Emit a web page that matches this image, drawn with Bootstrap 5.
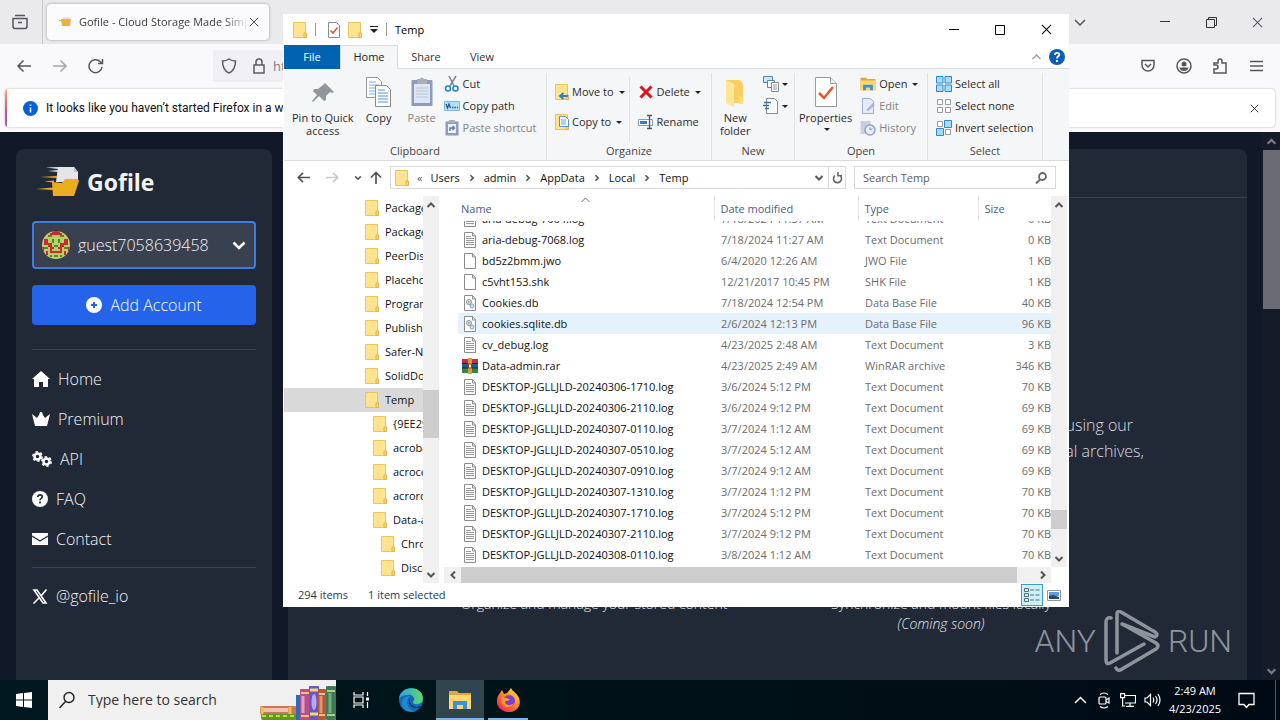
<!DOCTYPE html>
<html lang="en">
<head>
  <meta charset="UTF-8">
  <meta name="viewport" content="width=device-width, initial-scale=1">
  <title>Temp</title>
  <link href="https://cdn.jsdelivr.net/npm/bootstrap@5.3.0/dist/css/bootstrap.min.css" rel="stylesheet">
  <style>
    body {
      font-family: "Open Sans", "Noto Sans", sans-serif;
      font-size: 11px;
      line-height: 16px;
      color: #111;
      background: #111827;
    }
    svg { flex-shrink: 0; display: block; }
    .ln { fill: none; stroke: currentColor; stroke-width: 1.5; }
    a { color: inherit; text-decoration: none; }
    .plain { background: none; border: 0; padding: 0; color: inherit; }
    .slot { width: 36px; height: 44px; display: flex; align-items: center; justify-content: center; }

    /* Browser */
    .tabstrip { height: 44px; background: #eaeaed; color: #55555c; }
    .tabstrip-left { width: 43px; height: 44px; border-right: 1px solid #c8c8ce; padding-left: 12px; }
    .ff-tab { width: 222px; height: 36px; background: #fbfbfd; border-radius: 4px; box-shadow: 0 0 3px rgba(0,0,0,.35); color: #3b3b42; padding-left: 12px; }
    .ff-title { width: 170px; overflow: hidden; white-space: nowrap; -webkit-mask-image: linear-gradient(90deg, #000 85%, transparent); }
    .win-btn { width: 46px; height: 44px; }
    .ff-bar { height: 44px; background: #f9f9fb; color: #55555c; padding: 0 6px; }
    .ff-url { height: 32px; background: #f0f0f4; margin-left: 99px; margin-right: 200px; color: #5b5b66; }
    .ff-url input { font-size: 13px; color: #8a7f78; outline: 0; }
    .notice-wrap { background: #f9f9fb; padding: 1px 5px 5px; }
    .notice { height: 38px; background: #fff; border-radius: 4px; box-shadow: 0 0 2px rgba(0,0,0,.3); overflow: hidden; }
    .notice-edge { width: 2px; background: linear-gradient(#ffa45c, #e05a78, #9059c9); }
    .notice-text { font-family: Roboto, "Open Sans", sans-serif; font-size: 12px; }

    /* Gofile page */
    .page { color: #f3f4f6; min-height: 0; overflow: hidden; }
    .side { width: 256px; background: #212936; border-radius: 8px 8px 0 0; margin: 17px 16px 0; padding: 16px; font-size: 16px; font-weight: 300; }
    .brand { font-size: 23px; line-height: 34px; font-weight: 700; margin-bottom: 22px; padding-left: 4px; }
    .account { height: 48px; background: #394150; border: 2px solid #3f7be0; border-radius: 4px; padding: 0 8px; margin-bottom: 16px; }
    .account select { appearance: none; background: none; border: 0; outline: 0; color: #f3f4f6; font-weight: 300; min-width: 0; padding-left: 4px; }
    .add-btn { height: 40px; background: #2563eb; color: #fff; border: 0; border-radius: 4px; font-weight: 300; margin-bottom: 24px; }
    .rule { border-top: 1px solid #3b4554; }
    .side-nav { padding-top: 9px; }
    .side-link { height: 40px; }
    .main-pane { background: #212936; border-radius: 8px 8px 0 0; margin: 17px 15px 0 0; padding-top: 48px; }
    .intro { font-size: 16px; line-height: 26px; font-weight: 300; margin: 214px 103px 130px 0; color: #d8dbe0; }
    .intro-first { margin-right: 11px; }
    .features { max-width: 694px; font-size: 14px; line-height: 20px; font-weight: 300; color: #e4e6ea; }
    .page-scroll { width: 18px; background: #151c28; color: #777a82; }
    .page-scroll .slot { width: 18px; height: 18px; }
    .page-thumb { height: 159px; margin-left: 1px; background: #6a6b74; }
    .watermark { right: 48px; bottom: 48px; color: #8f949c; font-family: Roboto, "Open Sans", sans-serif; font-weight: 300; font-size: 32px; line-height: 62px; }

    /* Explorer window */
    .explorer { inset: 14px 211px 113px 283px; background: #fff; border-left: 1px solid #fff; }
    .titlebar { height: 31px; padding-left: 9px; }
    .caption-btn { width: 46px; height: 30px; display: flex; align-items: center; justify-content: center; }
    .quick-sep { width: 1px; height: 13px; background: #999; }
    .rtabs { height: 24px; border-bottom: 1px solid #dadbdc; }
    .rtab { height: 24px; line-height: 24px; width: 56px; text-align: center; color: #333; }
    .rtab-file { background: #0063b1; color: #fff; }
    .rtab-on { width: 58px; background: #f5f6f7; border: 1px solid #dadbdc; border-bottom: 0; color: #222; line-height: 22px; }
    .ribbon { height: 92px; background: #f5f6f7; border-bottom: 1px solid #dadbdc; color: #2b2b2b; padding-top: 4px; }
    .rgroup { border-right: 1px solid #e0e1e3; }
    .rgroup-label { line-height: 18px; color: #454545; text-align: center; }
    .big { line-height: 13px; display: flex; flex-direction: column; align-items: center; padding-top: 4px; }
    .big svg { margin-bottom: 2px; }
    .sm-btn { height: 22px; display: flex; align-items: center; gap: 3px; white-space: nowrap; }
    .org-btn { height: 30px; }
    .dim { color: #838383; }
    .g-clip { width: 263px; } .g-org { width: 165px; } .g-new { width: 83px; } .g-open { width: 133px; } .g-sel { width: 115px; }
    .tri { width: 0; height: 0; border: 3px solid transparent; border-top-color: #222; border-bottom: 0; margin-left: 2px; }
    .addr-row { padding: 5px 13px 7px 7px; color: #555; }
    .nav-slot { width: 25px; display: flex; justify-content: center; }
    .addr, .find { height: 23px; border: 1px solid #d9d9d9; }
    .find { width: 202px; margin-left: 8px; }
    .find input { outline: 0; min-width: 0; color: #444; }
    .find input::placeholder { color: #5d5d5d; }
    .crumb { color: #111; }
    .refresh { width: 17px; border-left: 1px solid #d9d9d9; }

    .tree-pane { width: 139px; flex-shrink: 0; overflow: hidden; }
    .tree-item { height: 24px; display: flex; align-items: center; gap: 6px; white-space: nowrap; padding-left: 81px; }
    .lvl-1 { padding-left: 89px; }
    .lvl-2 { padding-left: 97px; }
    .tree-on { background: #d9d9d9; }
    .vbar { width: 16px; flex-shrink: 0; background: #f0f0f0; color: #555; }
    .vbar .arrow { height: 17px; display: flex; align-items: center; justify-content: center; }
    .bar-thumb { background: #cdcdcd; }
    .vbar-list { margin-right: 2px; }
    .hbar { height: 16px; background: #f0f0f0; margin-right: 18px; color: #555; }
    .hbar .arrow { width: 17px; display: flex; align-items: center; justify-content: center; }

    .list-pane { margin-left: 5px; min-width: 0; }
    .list-scroll { padding-left: 14px; overflow: hidden; min-height: 0; }
    .files { width: 100%; table-layout: fixed; border-collapse: collapse; }
    .files th { height: 25px; padding: 0 0 0 6px; font-weight: 400; color: #4c607a; border-left: 1px solid #e5e5e5; position: relative; }
    .files th:first-child { padding-left: 3px; border-left: 0; }
    .sort-mark { position: absolute; top: 1px; left: 123px; color: #777; }
    .files td { padding: 0 0 0 7px; color: #6d6d6d; white-space: nowrap; }
    .files td:first-child { padding-left: 4px; color: #111; }
    .files td:last-child { text-align: right; }
    .line-box { height: 21px; line-height: 21px; }
    .files .hot td { background: #e5f1fb; }
    /* first row is scrolled under the header, only its lower part shows */
    .peek { height: 8px; overflow: hidden; display: flex; align-items: flex-end; }
    .peek-end { justify-content: flex-end; }
    .status { height: 24px; color: #1e395b; padding-left: 14px; }
    .view-on { width: 22px; height: 22px; border: 1px solid #3c9dc4; background: #cdeefb; display: flex; align-items: center; justify-content: center; }

    /* Taskbar */
    .taskbar { height: 40px; background: linear-gradient(90deg, #00191f, #001218 50%, #000a14); color: #fff; }
    .task-btn { width: 50px; display: flex; align-items: center; justify-content: center; }
    .task-app { width: 48px; }
    .task-run { border-bottom: 2px solid #76b9ed; padding-top: 2px; }
    .task-on { background: #31454c; }
    .task-search { width: 288px; background: #f0f0f0; color: #222; padding-left: 10px; }
    .task-search input { font-size: 14px; outline: 0; min-width: 0; }
    .task-search input::placeholder { color: #333; }
    .tray-btn { width: 24px; display: flex; justify-content: center; }
    .clock { width: 62px; line-height: 18px; text-align: center; }
    .peek-desk { width: 5px; border-left: 1px solid #4c5660; }
  </style>
</head>
<body class="vh-100 d-flex flex-column overflow-hidden position-relative">

  <!-- Shared icons -->
  <svg width="0" height="0" class="position-absolute" aria-hidden="true">
    <symbol id="folder" viewBox="0 0 14 16">
      <path d="M.5.5h12v15H.5z" fill="#ffe38f" stroke="#e8c65c"/>
      <path d="M11 11h2.500v4.500H11z" fill="#ffd768" stroke="#dfb548"/>
    </symbol>
    <symbol id="log" viewBox="0 0 14 16">
      <path d="M1.500.5h8l3 3.500v11.500h-11z" fill="#fff" stroke="#8c8c8c"/>
      <path d="M9.500.5V4h3" fill="none" stroke="#8c8c8c"/>
      <path d="M3 4.500h5M3 6.500h8M3 8.500h8M3 10.500h8M3 12.500h8" stroke="#9a9a9a"/>
    </symbol>
    <symbol id="blank" viewBox="0 0 14 16">
      <path d="M1.500.5h8l3 3.500v11.500h-11z" fill="#fff" stroke="#8c8c8c"/>
      <path d="M9.500.5V4h3" fill="none" stroke="#8c8c8c"/>
    </symbol>
    <symbol id="db" viewBox="0 0 14 16">
      <path d="M1.500.5h8l3 3.500v11.500h-11z" fill="#fff" stroke="#8c8c8c"/>
      <path d="M9.500.5V4h3" fill="none" stroke="#8c8c8c"/>
      <circle cx="6" cy="7" r="2.500" fill="#dce3ea" stroke="#8797a6"/>
      <circle cx="6" cy="7" r=".8" fill="#778"/>
      <circle cx="9" cy="11" r="2" fill="#d4e4f2" stroke="#7fa0bd"/>
    </symbol>
    <symbol id="rar" viewBox="0 0 16 16">
      <path d="M0 1h16v5H0z" fill="#c22f3d"/><path d="M0 6h16v4H0z" fill="#2f55a8"/><path d="M0 10h16v5H0z" fill="#2d8a4b"/>
      <path d="M0 5.500h16M0 10h16" stroke="#222"/>
      <path d="M6 0h4v16H6z" fill="#dd9b35"/><path d="M6.500 6h3v4h-3z" fill="#fff3b0" stroke="#704d14"/>
    </symbol>
    <symbol id="up" viewBox="0 0 10 10"><path d="M1.500 7 5 3.500 8.500 7" fill="none" stroke="currentColor" stroke-width="2"/></symbol>
    <symbol id="down" viewBox="0 0 10 10"><path d="M1.500 3 5 6.500 8.500 3" fill="none" stroke="currentColor" stroke-width="2"/></symbol>
    <symbol id="left" viewBox="0 0 10 10"><path d="M7 1.500 3.500 5 7 8.500" fill="none" stroke="currentColor" stroke-width="2"/></symbol>
    <symbol id="right" viewBox="0 0 10 10"><path d="M3 1.500 6.500 5 3 8.500" fill="none" stroke="currentColor" stroke-width="2"/></symbol>
    <symbol id="cross" viewBox="0 0 12 12"><path d="M1 1l10 10M11 1 1 11" fill="none" stroke="currentColor" stroke-width="1.100"/></symbol>
    <symbol id="check-page" viewBox="0 0 22 30">
      <path d="M.5.5h15l6 6v23H.5z" fill="#fff" stroke="#9a9a9a"/><path d="M15.500.5v6h6" fill="#eee" stroke="#9a9a9a"/>
      <path d="M4 16l5 5 9-11" fill="none" stroke="#e0562b" stroke-width="2.500"/>
    </symbol>
    <symbol id="check-page-sm" viewBox="0 0 12 16">
      <path d="M.5.5h8l3 3v12H.5z" fill="#fff" stroke="#8a8a8a"/><path d="M2.500 8.500 5 11l4.500-5.500" fill="none" stroke="#e0562b" stroke-width="1.600"/>
    </symbol>
    <symbol id="explorer-ico" viewBox="0 0 22 20">
      <path d="M0 1h8l2 2h12v16H0z" fill="#e8a33d"/><path d="M0 5h22v14H0z" fill="#ffd76e"/>
      <path d="M4 19v-8h14v8h-4v-4H8v4z" fill="#3f8fd6"/>
    </symbol>
  </svg>

  <!-- Firefox -->
  <header>
    <div class="tabstrip d-flex align-items-center">
      <div class="tabstrip-left d-flex align-items-center">
        <svg width="16" height="16" class="ln" viewBox="0 0 16 16"><path d="M3 1.500h10M1 4.500h14v8a2 2 0 0 1-2 2H3a2 2 0 0 1-2-2zM6 8.500h4"/></svg>
      </div>
      <div class="ff-tab d-flex align-items-center ms-1">
        <svg width="12" height="10" viewBox="0 0 12 10" class="me-1"><path d="M4 0h7v5H4z" fill="#e5e5e5"/><path d="M0 3h3v1H0zM2 2h10l-1 7H3z" fill="#e8b43c"/></svg>
        <span class="ff-title ms-1">Gofile - Cloud Storage Made Simple</span>
        <button class="plain" aria-label="Close tab"><svg width="10" height="10"><use href="#cross"/></svg></button>
      </div>
      <div class="d-flex align-items-center ms-auto">
        <button class="plain me-5 pe-2" aria-label="List all tabs"><svg width="12" height="7" class="ln" viewBox="0 0 12 7"><path d="M1 1l5 5 5-5"/></svg></button>
        <button class="plain win-btn d-flex align-items-center justify-content-center" aria-label="Minimize"><svg width="10" height="2"><path d="M0 .5h10" stroke="#333"/></svg></button>
        <button class="plain win-btn d-flex align-items-center justify-content-center" aria-label="Restore"><svg width="11" height="11" fill="none" stroke="#333"><path d="M.5 2.500h8v8h-8zM2.500 2.500v-2h8v8h-2"/></svg></button>
        <button class="plain win-btn d-flex align-items-center justify-content-center" aria-label="Close"><svg width="11" height="11"><use href="#cross"/></svg></button>
      </div>
    </div>
    <div class="ff-bar d-flex align-items-center">
      <button class="plain slot" aria-label="Back"><svg width="16" height="16" class="ln" viewBox="0 0 16 16"><path d="M15 8H2M7.500 2.500 2 8l5.500 5.500"/></svg></button>
      <button class="plain slot opacity-50" aria-label="Forward"><svg width="16" height="16" class="ln" viewBox="0 0 16 16"><path d="M1 8h13M8.500 2.500 14 8l-5.500 5.500"/></svg></button>
      <button class="plain slot" aria-label="Reload"><svg width="16" height="16" class="ln" viewBox="0 0 16 16"><path d="M14 9a6.500 6.500 0 1 1-2-5.500L14 5M14.500 1v4.500H10"/></svg></button>
      <div class="ff-url d-flex align-items-center flex-fill ps-2">
        <svg width="16" height="16" class="ln me-3" viewBox="0 0 16 16"><path d="M8 1c2 1.500 4 2 6.500 2 0 6-2 10-6.500 12C3.500 13 1.500 9 1.500 3 4 3 6 2.500 8 1z"/></svg>
        <svg width="12" height="16" class="ln me-2" viewBox="0 0 12 16"><path d="M1 7h10v8H1zM3 7V4a3 3 0 0 1 6 0v3"/></svg>
        <input class="plain flex-fill" type="text" value="https://gofile.io/home" aria-label="Address">
      </div>
      <button class="plain slot" aria-label="Pocket"><svg width="14" height="14" class="ln" viewBox="0 0 14 14"><path d="M1 1.500h12V6a6 6 0 0 1-12 0zM4 5l3 3 3-3"/></svg></button>
      <button class="plain slot" aria-label="Account"><svg width="16" height="16" viewBox="0 0 16 16"><circle cx="8" cy="8" r="7" class="ln"/><circle cx="8" cy="6" r="2.500" fill="currentColor"/><path d="M3.500 9.500h9c-.5 2.500-2 3.500-4.500 3.500s-4-1-4.500-3.500z" fill="currentColor"/></svg></button>
      <button class="plain slot" aria-label="Extensions"><svg width="16" height="16" class="ln" viewBox="0 0 16 16"><path d="M2 15v-4h2a1.500 1.500 0 0 0 0-4H2V5h4V3a2 2 0 0 1 4 0v2h4v10z"/></svg></button>
      <button class="plain slot" aria-label="Menu"><svg width="13" height="12" class="ln" viewBox="0 0 13 12"><path d="M0 1.500h13M0 6h13M0 10.500h13"/></svg></button>
    </div>
    <div class="notice-wrap">
      <div class="notice d-flex align-items-center">
        <div class="notice-edge h-100"></div>
        <svg width="15" height="15" viewBox="0 0 15 15" class="ms-3 me-2"><circle cx="7.500" cy="7.500" r="7.500" fill="#0061e0"/><path d="M7.500 6.500v5M7.500 3.500v1.500" stroke="#fff" stroke-width="1.500"/></svg>
        <span class="notice-text">It looks like you haven’t started Firefox in a while.</span>
        <button class="plain ms-auto me-3" aria-label="Dismiss"><svg width="9" height="9"><use href="#cross"/></svg></button>
      </div>
    </div>
  </header>

  <!-- Gofile -->
  <div class="page d-flex flex-fill">
    <aside class="side">
      <a href="#" class="brand d-flex align-items-center gap-2">
        <svg width="43" height="32" viewBox="0 0 43 32">
          <path d="M22 1h16l4 5v10H20z" fill="#e3e5ea"/><path d="M38 1v5h4z" fill="#b9bdc6"/>
          <path d="M16 16l10 1 3-4h13l1 2-5 15H17z" fill="#e9ad1e"/>
          <path d="M10 1.500 22 1v2zM12 5l10-1v2z" fill="#dfe2e8"/>
          <path d="M4 11l17-1v2zM8 15.500l10-1v2zM0 23l17-1.500v2.500z" fill="#e9ad1e"/>
        </svg>
        <span>Gofile</span>
      </a>
      <div class="account d-flex align-items-center">
        <svg width="28" height="28" viewBox="0 0 14 14" shape-rendering="crispEdges">
          <clipPath id="round"><circle cx="7" cy="7" r="7"/></clipPath>
          <g clip-path="url(#round)">
            <path fill="#b8cf6a" d="M0 0h14v14H0z"/>
            <path fill="#c92a35" d="M5 0h4v2H5zM4 1h1v1H4zM9 1h1v1H9zM1 4h2v3H1zM11 4h2v3h-2zM3 6h2v2H3zM9 6h2v2H9zM0 8h1v2H0zM13 8h1v2h-1zM4 8h1v3H4zM9 8h1v3H9zM5 10h4v1H5zM2 10h1v2H2zM11 10h1v2h-1zM5 8h1v1H5zM8 8h1v1H8z"/>
            <path fill="#56852c" d="M3 2h2v1H3zM9 2h2v1H9zM5 4h1v2H5zM8 4h1v2H8zM6 7h2v1H6zM1 8h2v1H1zM11 8h2v1h-2zM6 12h2v1H6zM4 12h1v1H4zM9 12h1v1H9z"/>
          </g>
        </svg>
        <select class="flex-fill ms-1" aria-label="Account"><option>guest7058639458</option></select>
        <svg width="14" height="9" viewBox="0 0 14 9"><path d="M1.500 1.500 7 7l5.500-5.500" fill="none" stroke="#fff" stroke-width="2.500"/></svg>
      </div>
      <button class="add-btn w-100 d-flex align-items-center justify-content-center gap-2">
        <svg width="16" height="16" viewBox="0 0 16 16"><circle cx="8" cy="8" r="8" fill="#fff"/><path d="M8 5v6M5 8h6" stroke="#2563eb" stroke-width="2"/></svg>
        Add Account
      </button>
      <div class="rule"></div>
      <nav class="side-nav">
        <a href="#" class="side-link d-flex align-items-center gap-2"><svg width="18" height="16" viewBox="0 0 18 16"><path d="M9 0l9 8h-2v8h-5v-5H7v5H2V8H0z" fill="#fff"/></svg>Home</a>
        <a href="#" class="side-link d-flex align-items-center gap-2"><svg width="18" height="14" viewBox="0 0 18 14"><path d="M3 14 0 2l5 4 4-6 4 6 5-4-3 12z" fill="#fff"/><circle cx="9" cy="1.500" r="1.500" fill="#fff"/></svg>Premium</a>
        <a href="#" class="side-link d-flex align-items-center gap-2"><svg width="20" height="16" viewBox="0 0 20 16" fill="none" stroke="#fff"><circle cx="5.500" cy="5.500" r="3" stroke-width="2.500"/><circle cx="5.500" cy="5.500" r="4.700" stroke-width="1.500" stroke-dasharray="2.400 2.500"/><circle cx="14.500" cy="10.500" r="3" stroke-width="2.500"/><circle cx="14.500" cy="10.500" r="4.700" stroke-width="1.500" stroke-dasharray="2.400 2.500"/></svg>API</a>
        <a href="#" class="side-link d-flex align-items-center gap-2"><svg width="16" height="16" viewBox="0 0 16 16"><circle cx="8" cy="8" r="8" fill="#fff"/><path d="M5.800 6c0-3 4.500-2.500 4.500-.2C10.300 7.500 8 7.200 8 9.200M8 10.500v2" fill="none" stroke="#212936" stroke-width="1.700"/></svg>FAQ</a>
        <a href="#" class="side-link d-flex align-items-center gap-2"><svg width="16" height="12" viewBox="0 0 16 12"><path d="M0 0h16v12H0z" fill="#fff"/><path d="M0 3l8 5 8-5" fill="none" stroke="#212936" stroke-width="1.200"/></svg>Contact</a>
        <div class="rule my-2"></div>
        <a href="#" class="side-link d-flex align-items-center gap-2"><svg width="16" height="15" viewBox="0 0 16 15"><path d="M2 1h3l9 13h-3zM14.500.5 9 7M7 9l-5.500 5.500" fill="none" stroke="#fff" stroke-width="1.600"/></svg>@gofile_io</a>
      </nav>
    </aside>
    <main class="main-pane flex-fill">
      <div class="rule"></div>
      <p class="intro text-end"><span class="d-block intro-first">using our</span>digital archives,</p>
      <div class="features row g-0 mx-auto text-center">
        <div class="col">Organize and manage your stored content</div>
        <div class="col">Synchronize and mount files locally<br><em>(Coming soon)</em></div>
      </div>
    </main>
    <div class="page-scroll d-flex flex-column">
      <div class="slot"><svg width="11" height="11"><use href="#up"/></svg></div>
      <div class="page-thumb"></div>
      <div class="slot mt-auto"><svg width="11" height="11"><use href="#down"/></svg></div>
    </div>
  </div>

  <!-- Taskbar -->
  <footer class="taskbar d-flex">
    <button class="plain task-btn task-app" aria-label="Start"><svg width="16" height="16" viewBox="0 0 16 16"><path d="M0 2l7-1v6.500H0zM8 1l8-1v7.500H8zM0 8.500h7V15l-7-1zM8 8.500h8V16l-8-1z" fill="#fff"/></svg></button>
    <div class="task-search d-flex align-items-center">
      <svg width="18" height="18" viewBox="0 0 18 18" fill="none" stroke="#222" stroke-width="1.400"><circle cx="11" cy="6.500" r="5"/><path d="M7.500 10.500 1.500 17"/></svg>
      <input class="plain flex-fill ms-2 ps-1" type="text" placeholder="Type here to search" aria-label="Search">
      <svg width="76" height="36" viewBox="0 0 76 36" class="align-self-end">
        <rect x="0" y="22" width="37" height="9" rx="2" fill="#cf7358"/><rect x="3" y="24" width="25" height="4" fill="#eec1ae"/><path d="M2 23v7M30 23v7" stroke="#e8c24a" stroke-width="3"/>
        <rect x="1" y="30" width="36" height="6" rx="2" fill="#5c9c1d"/><path d="M2 32h33" stroke="#c7cf59" stroke-width="2" stroke-dasharray="4 3"/>
        <rect x="36" y="11" width="5" height="25" fill="#2b6cb8"/><rect x="40" y="5" width="10" height="31" rx="1" fill="#b84f88"/><path d="M43 12v17" stroke="#e3a0c4" stroke-width="3"/>
        <path d="M41 9h8M41 32h8" stroke="#f0c46a" stroke-width="2"/>
        <rect x="49" y="2" width="10" height="34" rx="1" fill="#6b55c4"/><path d="M50 6h8M50 30h8" stroke="#f1d77a" stroke-width="3"/><ellipse cx="54" cy="18" rx="2.500" ry="8" fill="#b9a6f0"/>
        <rect x="58" y="5" width="8" height="31" rx="1" fill="#b5573b"/><path d="M61 12v17" stroke="#dc9870" stroke-width="3"/><path d="M59 10h6M59 31h6" stroke="#f2c08b" stroke-width="2"/>
        <rect x="66" y="2" width="10" height="34" rx="1" fill="#3d7a55"/><path d="M70 9v20" stroke="#76ab82" stroke-width="3"/><path d="M67 7h8M67 31h8" stroke="#b9c987" stroke-width="2"/>
      </svg>
    </div>
    <button class="plain task-btn" aria-label="Task view"><svg width="17" height="16" viewBox="0 0 17 16" fill="none" stroke="#fff" stroke-width="1.200"><path d="M1 0v3h9V0M1 16v-3h9v3M1 5h9v6H1zM14.500 0v4M14.500 10v6"/><path d="M13 5.500h3v3h-3z" fill="#fff" stroke="none"/></svg></button>
    <button class="plain task-btn" aria-label="Edge">
      <svg width="24" height="24" viewBox="0 0 24 24">
        <defs><linearGradient id="edge-top"><stop stop-color="#2aa4dc"/><stop offset="1" stop-color="#5fd86a"/></linearGradient></defs>
        <circle cx="12" cy="12" r="12" fill="#1668b5"/>
        <path d="M0 11C1-3 23-3 24 10c0 5-4 7-8 6-3-1-2-2-1-4 1-3-3-6-7-5-4 0-7 2-8 4z" fill="url(#edge-top)"/>
        <path d="M9 11c-3 6 2 12 8 12C8 26 2 20 3 14c1-4 4-6 8-6-1 1-2 2-2 3z" fill="#1e8ad2"/>
        <path d="M11 11c-2 5 4 10 11 7l2 0c-4 3-14 3-14-5 0-1 .5-1.500 1-2z" fill="#062c44"/>
      </svg>
    </button>
    <button class="plain task-btn task-app task-run task-on" aria-label="File Explorer"><svg width="22" height="20"><use href="#explorer-ico"/></svg></button>
    <button class="plain task-btn task-app px-1" aria-label="Firefox">
      <span class="task-run w-100 h-100 d-flex align-items-center justify-content-center">
        <svg width="23" height="24" viewBox="0 0 23 24">
          <defs><linearGradient id="fox" x1="1" y1="0" x2=".2" y2="1"><stop stop-color="#fff04a"/><stop offset=".5" stop-color="#ff8a22"/><stop offset="1" stop-color="#f01a62"/></linearGradient></defs>
          <path d="M3 5l2-3 2 4 3-1 4-5c1 3 6 5 8 10 3 8-3 14-10 14C4 24-3 17 1 8z" fill="url(#fox)"/>
          <circle cx="12" cy="13" r="6" fill="#7b3fd0"/><path d="M4 10c3-2 5 1 9 1-2 3-4 1-5 3 1 4 6 4 9 1-2 6-14 6-13-5z" fill="#ff9c26"/>
        </svg>
      </span>
    </button>
    <div class="d-flex align-items-center ms-auto">
      <button class="plain tray-btn" aria-label="Hidden icons"><svg width="13" height="8" class="ln" viewBox="0 0 13 8"><path d="M1 7l5.500-5.500L12 7"/></svg></button>
      <button class="plain tray-btn" aria-label="Meet now"><svg width="12" height="17" viewBox="0 0 12 17" fill="none" stroke="#fff" stroke-width="1.200"><path d="M2 2.500Q6-.5 10 2.500M2 14.500q4 3 8 0"/><rect x="1" y="5" width="7" height="7" rx="1"/><path d="M8 8l3-2v5L8 9.500"/></svg></button>
      <button class="plain tray-btn" aria-label="Network"><svg width="16" height="14" viewBox="0 0 16 14" fill="none" stroke="#fff" stroke-width="1.200"><path d="M5 2.500h10.500v7.500H5M10 10v3M6 13.400h8M.6.6h4v4h-4zM2.600 4.600V13H5"/></svg></button>
      <button class="plain tray-btn" aria-label="Volume"><svg width="17" height="14" viewBox="0 0 17 14" fill="none" stroke="#fff" stroke-width="1.200"><path d="M1 5v4h2l3.500 3.500v-11L3 5zM9 4.500q1.500 2.500 0 5M11.500 3q3 4 0 8M14 1q4 6 0 12"/></svg></button>
      <div class="clock">2:49 AM<br>4/23/2025</div>
      <button class="plain tray-btn ms-2 px-1 w-auto" aria-label="Notifications"><svg width="17" height="17" viewBox="0 0 17 17" fill="none" stroke="#fff" stroke-width="1.300"><path d="M1 1.500h15v11h-5L8.500 15.500 6 12.500H1z"/></svg></button>
      <div class="peek-desk h-100 ms-3"></div>
    </div>
  </footer>

  <!-- File Explorer window -->
  <section class="explorer position-absolute d-flex flex-column overflow-hidden">
    <div class="titlebar d-flex align-items-center">
      <svg width="14" height="16"><use href="#folder"/></svg>
      <div class="quick-sep mx-2"></div>
      <svg width="12" height="16" class="ms-1 me-2"><use href="#check-page-sm"/></svg>
      <svg width="14" height="16" class="me-2"><use href="#folder"/></svg>
      <svg width="8" height="7"><path d="M0 .5h8" stroke="#222"/><path d="M0 3h8L4 7z" fill="#222"/></svg>
      <div class="quick-sep ms-2 me-1"></div>
      <span class="text-black ms-1">Temp</span>
      <div class="d-flex ms-auto">
        <button class="plain caption-btn" aria-label="Minimize"><svg width="10" height="2"><path d="M0 .5h10" stroke="#000"/></svg></button>
        <button class="plain caption-btn" aria-label="Maximize"><svg width="10" height="10"><path d="M.5.5h9v9h-9z" fill="none" stroke="#000"/></svg></button>
        <button class="plain caption-btn text-black" aria-label="Close"><svg width="11" height="11"><use href="#cross"/></svg></button>
      </div>
    </div>

    <div class="rtabs d-flex">
      <a href="#" class="rtab rtab-file">File</a>
      <a href="#" class="rtab rtab-on">Home</a>
      <a href="#" class="rtab">Share</a>
      <a href="#" class="rtab">View</a>
      <div class="ms-auto d-flex align-items-center gap-2 pe-1">
        <svg width="9" height="6" viewBox="0 0 9 6"><path d="M.5 5l4-4 4 4" fill="none" stroke="#999" stroke-width="1.300"/></svg>
        <svg width="16" height="16" viewBox="0 0 16 16"><circle cx="8" cy="8" r="8" fill="#0a5fb4"/><path d="M5.800 6c0-3 4.500-2.500 4.500-.2C10.300 7.500 8 7.200 8 9.500M8 11v2" fill="none" stroke="#fff" stroke-width="1.800"/></svg>
      </div>
    </div>

    <div class="ribbon d-flex">
      <div class="rgroup g-clip d-flex flex-column">
        <div class="d-flex flex-fill ps-2">
          <button class="plain big">
            <svg width="32" height="32" viewBox="0 0 32 32"><path d="M18 6l9 9-2 1-2-1-4 4 0 4-2 1-5-5-6 6-1-1 5-6-4-4 1-2h4l5-4z" fill="#8f979c"/></svg>
            Pin to Quick<br>access
          </button>
          <button class="plain big ms-2 ps-1">
            <svg width="26" height="30" viewBox="0 0 26 30" class="mb-1"><path d="M.5.5h11l4 4v16H.5z" fill="#fff" stroke="#9a9a9a"/><path d="M3 5h7M3 8h10M3 11h6M3 14h6M3 17h6" stroke="#7aa7dc"/><path d="M9.500 8.500h11l4 4v17h-15z" fill="#fff" stroke="#8b8b8b"/><path d="M12 13h7M12 16h10M12 19h10M12 22h10M12 25h10" stroke="#4f8ed6"/></svg>
            Copy
          </button>
          <button class="plain big dim ms-3">
            <svg width="22" height="30" viewBox="0 0 22 30" class="mb-1"><rect x=".5" y="3" width="21" height="26" rx="1" fill="#8c9cb8"/><path d="M3 7h16v19H3z" fill="#dde5f2"/><path d="M6 2h3q2-3 4 0h3v5H6z" fill="#a9afb8"/><path d="M5 11h12M5 14h12M5 17h12M5 20h12" stroke="#b9c6dc"/></svg>
            Paste
          </button>
          <div class="ms-2">
            <button class="plain sm-btn"><svg width="16" height="16" viewBox="0 0 16 16"><path d="M5 0l5 10M12 0 6 10" stroke="#7d8790" stroke-width="1.500"/><circle cx="4" cy="12.500" r="2.500" fill="none" stroke="#2685c8" stroke-width="1.600"/><circle cx="11.500" cy="12.500" r="2.500" fill="none" stroke="#2685c8" stroke-width="1.600"/></svg>Cut</button>
            <button class="plain sm-btn"><svg width="16" height="10" viewBox="0 0 16 10"><path d="M.5.5h15v9H.5z" fill="#b9ddf5" stroke="#7fb7de"/><path d="M2 3l1.500 4L5 3l1.500 4M8 6.500h1.500M10.500 6.500h1.500M13 6.500h1" fill="none" stroke="#1d5d94" stroke-width="1.300"/></svg>Copy path</button>
            <button class="plain sm-btn dim"><svg width="16" height="16" viewBox="0 0 14 16"><rect x=".5" y="1.500" width="13" height="14" fill="#8c9cb8"/><path d="M3 4h8v9H3z" fill="#eef2f9"/><path d="M4 0h6v3H4z" fill="#a9afb8"/><path d="M5 11V8h4M7.500 6 9.500 8 7.500 10" fill="none" stroke="#5f7fb5" stroke-width="1.500"/></svg>Paste shortcut</button>
          </div>
        </div>
        <div class="rgroup-label">Clipboard</div>
      </div>

      <div class="rgroup g-org d-flex flex-column">
        <div class="d-flex flex-fill ps-2 pt-1">
          <div>
            <button class="plain sm-btn org-btn"><svg width="14" height="16"><use href="#folder"/><path d="M5 12h8M8.500 9 5 12l3.500 3" fill="none" stroke="#2f82c9" stroke-width="2"/></svg>Move to <span class="tri"></span></button>
            <button class="plain sm-btn org-btn"><svg width="14" height="16"><use href="#folder"/><path d="M4.500 2.500h6l3 3v7h-9z" fill="#fff" stroke="#5f8fc4"/><path d="M6 6h5M6 8h5M6 10h5" stroke="#5f9fe0"/></svg>Copy to <span class="tri"></span></button>
          </div>
          <div class="border-start ms-1 ps-2">
            <button class="plain sm-btn org-btn"><svg width="16" height="14" viewBox="0 0 16 14"><path d="M2.500 1.500 13.500 12.500M13.500 1.500 2.500 12.500" stroke="#d8141c" stroke-width="3"/></svg>Delete <span class="tri"></span></button>
            <button class="plain sm-btn org-btn"><svg width="16" height="16" viewBox="0 0 16 16"><path d="M.5 5.500h14v6H.5z" fill="#fff" stroke="#7f9fc0"/><path d="M2 7h7v3H2z" fill="#2f7fc9"/><path d="M9 1.500h5M9 14.500h5M11.500 1.500v13" stroke="#555" stroke-width="1.300"/></svg>Rename</button>
          </div>
        </div>
        <div class="rgroup-label">Organize</div>
      </div>

      <div class="rgroup g-new d-flex flex-column">
        <div class="d-flex flex-fill ps-2">
          <button class="plain big">
            <svg width="20" height="32" viewBox="0 0 20 32"><path d="M1 3h14l3 4v19H1z" fill="#f7cf63"/><path d="M1 3l8 4v23l-8-4z" fill="#ffe594"/><path d="M14 20h4v7h-4z" fill="#ffdb7a"/></svg>
            New<br>folder
          </button>
          <div class="ms-2 ps-1">
            <button class="plain sm-btn" aria-label="New item"><svg width="16" height="16" viewBox="0 0 16 16" fill="#fff"><path d="M.5.5h9v6h-9z" fill="#cfe6f7" stroke="#4d87b3"/><path d="M4.500 4.500h7v7h-7z" stroke="#4d87b3"/><path d="M8.500 6.500h7v9h-7z" stroke="#8a8a8a"/><path d="M10 9h4M10 11h4M10 13h4" stroke="#999"/></svg><span class="tri m-0"></span></button>
            <button class="plain sm-btn" aria-label="Easy access"><svg width="16" height="16" viewBox="0 0 16 16" fill="#fff"><path d="M3.500.5h8l3 3v12h-11z" stroke="#8a8a8a"/><path d="M1 4.500h7M0 7.500h6M2 10.500h4" stroke="#2b71a8" stroke-width="1.300"/></svg><span class="tri m-0"></span></button>
          </div>
        </div>
        <div class="rgroup-label">New</div>
      </div>

      <div class="rgroup g-open d-flex flex-column">
        <div class="d-flex flex-fill ps-1">
          <button class="plain big">
            <svg width="22" height="30" class="mb-1"><use href="#check-page"/></svg>
            Properties<span class="tri mt-1"></span>
          </button>
          <div class="ms-1 ps-1">
            <button class="plain sm-btn"><svg width="16" height="14" viewBox="0 0 22 20"><use href="#explorer-ico"/></svg>Open <span class="tri"></span></button>
            <button class="plain sm-btn dim"><svg width="16" height="16" viewBox="0 0 16 16"><path d="M2.500.5h8l3 3v12h-11z" fill="#e6ebf5" stroke="#a3b0cc"/><path d="M6 12 13 5l2 2-7 6z" fill="#a8b7d6"/></svg>Edit</button>
            <button class="plain sm-btn dim"><svg width="16" height="16" viewBox="0 0 16 16"><path d="M.5 1h10v13H.500z" fill="#c8d0e0"/><circle cx="10" cy="10" r="5" fill="#e9eef8" stroke="#8fa3c8" stroke-width="1.500"/><path d="M10 7.500V10l2.500-1.500" fill="none" stroke="#7f93bb"/></svg>History</button>
          </div>
        </div>
        <div class="rgroup-label">Open</div>
      </div>

      <div class="rgroup g-sel d-flex flex-column">
        <div class="flex-fill ps-2">
          <button class="plain sm-btn"><svg width="16" height="16" viewBox="0 0 16 16"><path d="M.5.5h6.500v6.500H.5zM9 .5h6.500v6.500H9zM.5 9h6.500v6.500H.5zM9 9h6.500v6.500H9z" fill="#a9dbf7" stroke="#2a8ad0"/></svg>Select all</button>
          <button class="plain sm-btn"><svg width="16" height="16" viewBox="0 0 16 16"><path d="M1.500 1.500h5v5h-5zM9.500 1.500h5v5h-5zM1.500 9.500h5v5h-5zM9.500 9.500h5v5h-5z" fill="#fff" stroke="#9a9a9a"/></svg>Select none</button>
          <button class="plain sm-btn"><svg width="16" height="16" viewBox="0 0 16 16"><path d="M1.500 1.500h5v5h-5zM9.500 9.500h5v5h-5z" fill="#fff" stroke="#9a9a9a"/><path d="M8.500.5h7v7h-7zM.5 8.500h7v7h-7z" fill="#a9dbf7" stroke="#2a8ad0"/></svg>Invert selection</button>
        </div>
        <div class="rgroup-label">Select</div>
      </div>
    </div>

    <div class="addr-row d-flex align-items-center">
      <button class="plain nav-slot" aria-label="Back"><svg width="13" height="11" viewBox="0 0 13 11"><path d="M13 5.500H1M6 .8 1.300 5.500 6 10.200" fill="none" stroke="#555" stroke-width="1.700"/></svg></button>
      <button class="plain nav-slot ms-1" aria-label="Forward"><svg width="13" height="11" viewBox="0 0 13 11"><path d="M0 5.500h12M7 .8l4.700 4.700L7 10.200" fill="none" stroke="#ccc" stroke-width="1.700"/></svg></button>
      <button class="plain nav-slot" aria-label="Recent"><svg width="8" height="8"><use href="#down"/></svg></button>
      <button class="plain me-2" aria-label="Up"><svg width="12" height="13" viewBox="0 0 12 13"><path d="M6 13V1.500M1 6.500l5-5 5 5" fill="none" stroke="#555" stroke-width="1.700"/></svg></button>
      <div class="addr d-flex align-items-center flex-fill ps-1">
        <svg width="14" height="16"><use href="#folder"/></svg>
        <nav class="d-flex align-items-center gap-2 ps-2" id="crumbs" aria-label="Path"></nav>
        <button class="plain ms-auto me-1" aria-label="Previous locations"><svg width="10" height="10"><use href="#down"/></svg></button>
        <button class="plain refresh h-100 d-flex align-items-center justify-content-center" aria-label="Refresh"><svg width="11" height="12" viewBox="0 0 11 12"><path d="M8 3.500A4 4 0 1 1 3 3.500M6 0v3.800h4" fill="none" stroke="#666" stroke-width="1.600"/></svg></button>
      </div>
      <div class="find d-flex align-items-center px-2">
        <input class="plain flex-fill" type="text" placeholder="Search Temp" aria-label="Search Temp">
        <svg width="12" height="12" viewBox="0 0 12 12" fill="none" stroke="#666" stroke-width="1.800"><circle cx="7.500" cy="4.500" r="3.500"/><path d="M5 7.500 1 11.500"/></svg>
      </div>
    </div>

    <div class="d-flex flex-fill overflow-hidden">
      <nav class="tree-pane" id="tree" aria-label="Folders"></nav>
      <div class="vbar d-flex flex-column">
        <div class="arrow"><svg width="10" height="10"><use href="#up"/></svg></div>
        <div style="flex-grow: 177"></div>
        <div class="bar-thumb" style="height: 48px"></div>
        <div style="flex-grow: 128"></div>
        <div class="arrow"><svg width="10" height="10"><use href="#down"/></svg></div>
      </div>
      <div class="list-pane flex-fill d-flex flex-column">
        <div class="d-flex flex-fill overflow-hidden">
          <div class="list-scroll flex-fill">
            <table class="files">
              <colgroup><col><col style="width: 144px"><col style="width: 120px"><col style="width: 73px"></colgroup>
              <thead>
                <tr><th>Name<svg class="sort-mark" width="9" height="6" viewBox="0 0 9 6"><path d="M.5 5l4-4 4 4" fill="none" stroke="#777"/></svg></th><th>Date modified</th><th>Type</th><th>Size</th></tr>
              </thead>
              <tbody id="fileRows"></tbody>
            </table>
          </div>
          <div class="vbar vbar-list d-flex flex-column">
            <div class="arrow"><svg width="10" height="10"><use href="#up"/></svg></div>
            <div style="flex-grow: 296"></div>
            <div class="bar-thumb" style="height: 19px"></div>
            <div style="flex-grow: 21"></div>
            <div class="arrow"><svg width="10" height="10"><use href="#down"/></svg></div>
          </div>
        </div>
        <div class="hbar d-flex">
          <div class="arrow"><svg width="10" height="10"><use href="#left"/></svg></div>
          <div class="bar-thumb" style="flex-grow: 556"></div>
          <div style="flex-grow: 17"></div>
          <div class="arrow"><svg width="10" height="10"><use href="#right"/></svg></div>
        </div>
      </div>
    </div>

    <div class="status d-flex align-items-center">
      <span>294 items</span>
      <span class="ms-3 ps-1">1 item selected</span>
      <div class="d-flex align-items-center ms-auto gap-1 pe-2">
        <button class="plain view-on" aria-label="Details view"><svg width="16" height="14" viewBox="0 0 16 14" fill="none" stroke="#5a6b78"><path d="M.5.500h4v3h-4zM.5 5.500h4v3h-4zM.5 10.500h4v3h-4zM6 2h4M11.500 2h4M6 7h4M11.500 7h4M6 12h4M11.500 12h4"/></svg></button>
        <button class="plain" aria-label="Large icons view"><svg width="14" height="11" viewBox="0 0 14 11"><path d="M.5.5h13v10H.5z" fill="#fff" stroke="#8796a5"/><path d="M2 2h10v4H2z" fill="#5b9be0"/><path d="M2 6l4-1 6 2v2H2z" fill="#284a5e"/></svg></button>
      </div>
    </div>
  </section>

  <div class="watermark position-absolute d-flex align-items-center gap-2 pe-none">
    <span>ANY</span>
    <svg width="56" height="62" viewBox="0 0 56 62" fill="none" stroke="#8f949c" stroke-width="3.500" stroke-linejoin="round" stroke-linecap="round">
      <path d="M7 8Q2 7 2 12v38q0 5 4 3l34-19M13 43V4q0-4 4-2l34 20q4 3 0 5L18 14"/>
      <path d="M12 58q2 4 6 1l34-20q4-3 0-6L20 15"/>
    </svg>
    <span>RUN</span>
  </div>

  <script src="https://cdn.jsdelivr.net/npm/bootstrap@5.3.0/dist/js/bootstrap.bundle.min.js"></script>
  <script>
    const crumbs = ['Users', 'admin', 'AppData', 'Local', 'Temp'];

    // [name, indent level]
    const folders = [
      ['Packages', 0], ['Package Cache', 0], ['PeerDistRepub', 0], ['PlaceholderTileLogo', 0],
      ['Programs', 0], ['Publishers', 0], ['Safer-Networking', 0], ['SolidDocuments', 0], ['Temp', 0],
      ['{9EE29', 1], ['acrobat', 1], ['acrocef', 1], ['acrord32', 1], ['Data-admin', 1],
      ['Chrome', 2], ['Discord', 2]
    ];

    // [icon, name, date, type, size]
    const files = [
      ['log', 'aria-debug-7004.log', '7/18/2024 11:37 AM', 'Text Document', '0 KB'],
      ['log', 'aria-debug-7068.log', '7/18/2024 11:27 AM', 'Text Document', '0 KB'],
      ['blank', 'bd5z2bmm.jwo', '6/4/2020 12:26 AM', 'JWO File', '1 KB'],
      ['blank', 'c5vht153.shk', '12/21/2017 10:45 PM', 'SHK File', '1 KB'],
      ['db', 'Cookies.db', '7/18/2024 12:54 PM', 'Data Base File', '40 KB'],
      ['db', 'cookies.sqlite.db', '2/6/2024 12:13 PM', 'Data Base File', '96 KB'],
      ['log', 'cv_debug.log', '4/23/2025 2:48 AM', 'Text Document', '3 KB'],
      ['rar', 'Data-admin.rar', '4/23/2025 2:49 AM', 'WinRAR archive', '346 KB'],
      ['log', 'DESKTOP-JGLLJLD-20240306-1710.log', '3/6/2024 5:12 PM', 'Text Document', '70 KB'],
      ['log', 'DESKTOP-JGLLJLD-20240306-2110.log', '3/6/2024 9:12 PM', 'Text Document', '69 KB'],
      ['log', 'DESKTOP-JGLLJLD-20240307-0110.log', '3/7/2024 1:12 AM', 'Text Document', '69 KB'],
      ['log', 'DESKTOP-JGLLJLD-20240307-0510.log', '3/7/2024 5:12 AM', 'Text Document', '69 KB'],
      ['log', 'DESKTOP-JGLLJLD-20240307-0910.log', '3/7/2024 9:12 AM', 'Text Document', '69 KB'],
      ['log', 'DESKTOP-JGLLJLD-20240307-1310.log', '3/7/2024 1:12 PM', 'Text Document', '70 KB'],
      ['log', 'DESKTOP-JGLLJLD-20240307-1710.log', '3/7/2024 5:12 PM', 'Text Document', '70 KB'],
      ['log', 'DESKTOP-JGLLJLD-20240307-2110.log', '3/7/2024 9:12 PM', 'Text Document', '70 KB'],
      ['log', 'DESKTOP-JGLLJLD-20240308-0110.log', '3/8/2024 1:12 AM', 'Text Document', '70 KB']
    ];

    document.getElementById('crumbs').innerHTML = '<span>«</span>' + crumbs
      .map(name => `<a href="#" class="crumb">${name}</a>`)
      .join('<svg width="8" height="8"><use href="#right"/></svg>');

    document.getElementById('tree').innerHTML = folders.map(([name, level]) =>
      `<a href="#" class="tree-item lvl-${level} ${name === 'Temp' ? 'tree-on' : ''}">
        <svg width="14" height="16"><use href="#folder"/></svg>${name}</a>`
    ).join('');

    document.getElementById('fileRows').innerHTML = files.map((file, i) => {
      const [icon, name, date, type, size] = file;
      const cells = [
        `<div class="line-box d-flex align-items-center gap-1"><svg width="16" height="16"><use href="#${icon}"/></svg>
          <span>${name}</span></div>`,
        `<div class="line-box">${date}</div>`,
        `<div class="line-box">${type}</div>`,
        `<div class="line-box">${size}</div>`
      ];
      return `<tr class="${name === 'cookies.sqlite.db' ? 'hot' : ''}">` + cells.map((cell, c) =>
        `<td>${i === 0 ? `<div class="peek ${c === 3 ? 'peek-end' : ''}">${cell}</div>` : cell}</td>`
      ).join('') + '</tr>';
    }).join('');
  </script>
</body>
</html>
